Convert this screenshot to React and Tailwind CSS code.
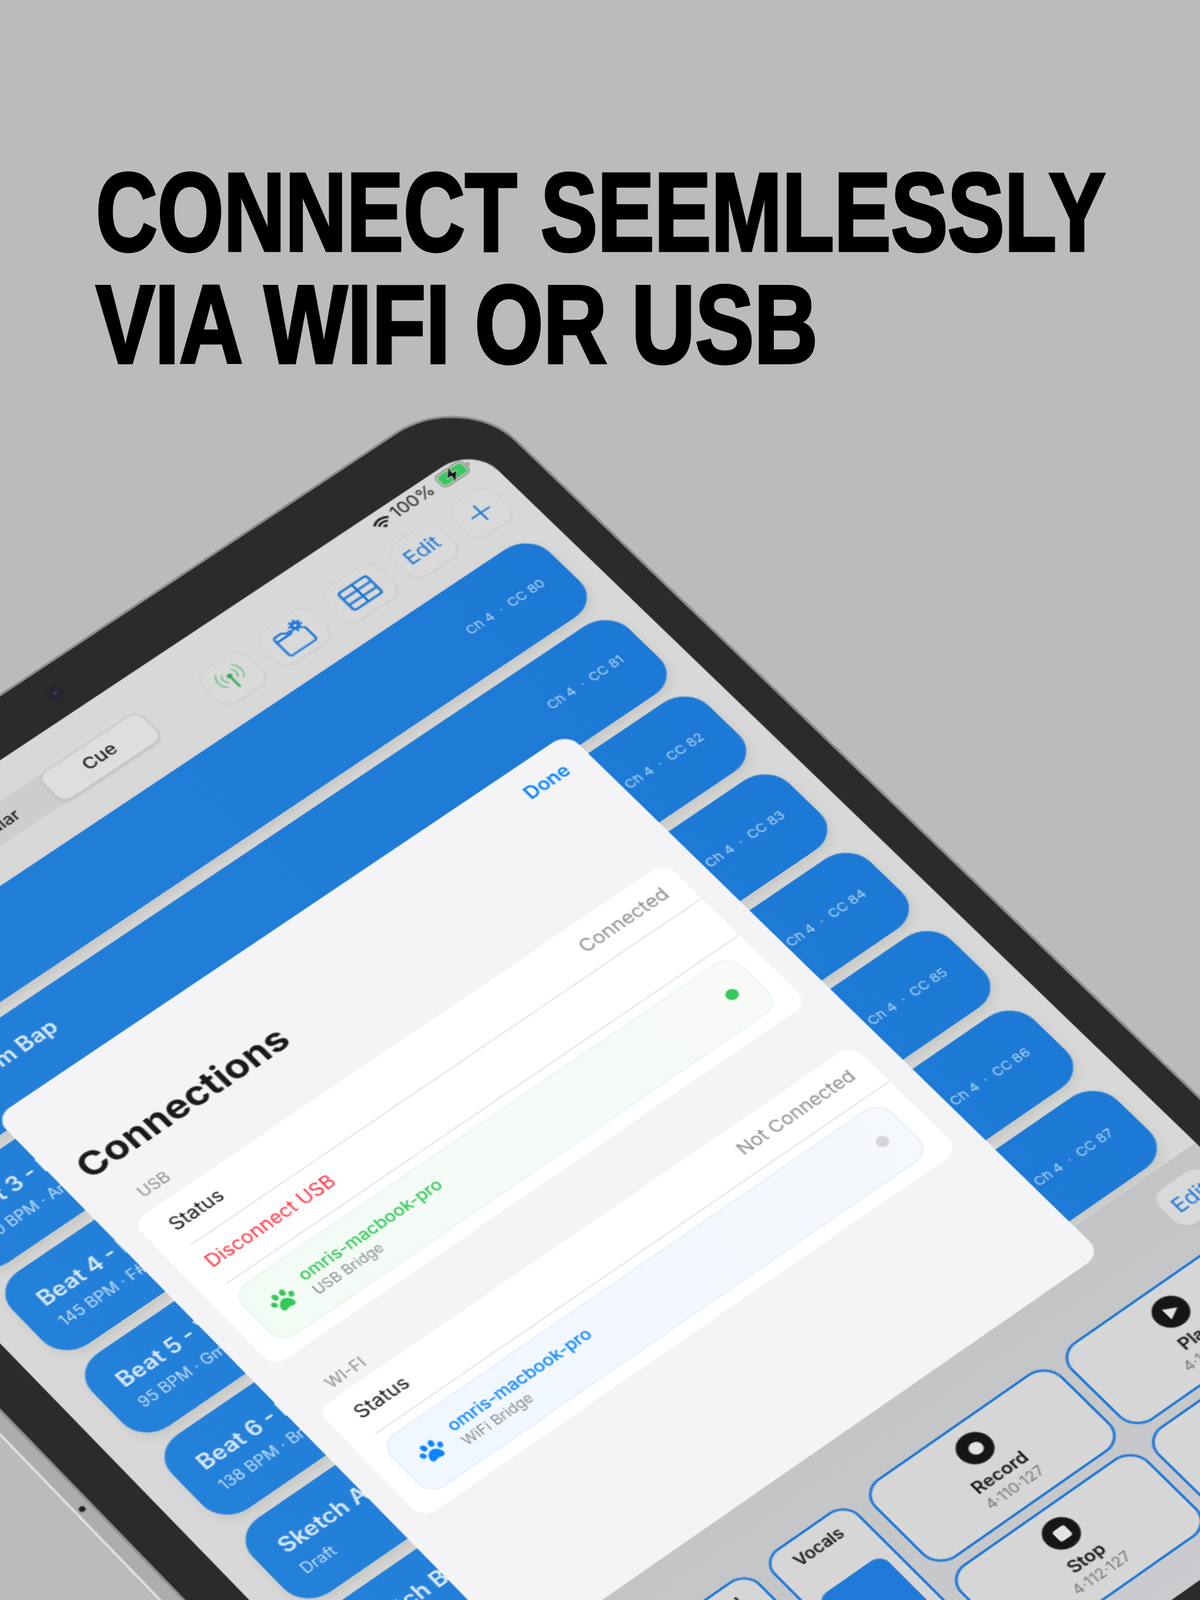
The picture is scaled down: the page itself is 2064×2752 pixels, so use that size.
const SCALE = 2064 / 1176;

// corners of the sheet as they land in the picture (shrunk coords, TL TR BR BL)
const SHEET_QUAD = [
  [-9, 1095],
  [552, 718],
  [1076, 1228],
  [508, 1622],
];

// sheet rectangle inside the device box
const SHEET_RECT = { x: 155, y: 303, w: 540, h: 620 };

function tiltMatrix(quad, rect) {
  const [p0, p1, p2, p3] = quad.map(([x, y]) => [x * SCALE, y * SCALE]);
  const dx1 = p1[0] - p2[0];
  const dy1 = p1[1] - p2[1];
  const dx2 = p3[0] - p2[0];
  const dy2 = p3[1] - p2[1];
  const sx = p0[0] - p1[0] + p2[0] - p3[0];
  const sy = p0[1] - p1[1] + p2[1] - p3[1];
  const det = dx1 * dy2 - dx2 * dy1;
  const g = (sx * dy2 - dx2 * sy) / det;
  const h = (dx1 * sy - sx * dy1) / det;
  const a = p1[0] - p0[0] + g * p1[0];
  const b = p3[0] - p0[0] + h * p3[0];
  const d = p1[1] - p0[1] + g * p1[1];
  const e = p3[1] - p0[1] + h * p3[1];
  const m11 = a / rect.w;
  const m12 = b / rect.h;
  const m21 = d / rect.w;
  const m22 = e / rect.h;
  const m31 = g / rect.w;
  const m32 = h / rect.h;
  const tx = p0[0] - m11 * rect.x - m12 * rect.y;
  const ty = p0[1] - m21 * rect.x - m22 * rect.y;
  const tw = 1 - m31 * rect.x - m32 * rect.y;
  return `matrix3d(${[m11, m21, 0, m31, m12, m22, 0, m32, 0, 0, 1, 0, tx, ty, 0, tw].join(",")})`;
}

const rows = [
  { title: "Beat 1 - Trap", sub: "140 BPM · Cm", cc: 80 },
  { title: "Beat 2 - Boom Bap", sub: "90 BPM · Dm", cc: 81 },
  { title: "Beat 3 - Dusty", sub: "120 BPM · Am", cc: 82 },
  { title: "Beat 4 - Dark", sub: "145 BPM · F#m", cc: 83 },
  { title: "Beat 5 - Vibe", sub: "95 BPM · Gm", cc: 84 },
  { title: "Beat 6 - Drill", sub: "138 BPM · Bm", cc: 85 },
  { title: "Sketch A", sub: "Draft", cc: 86 },
  { title: "Sketch B", sub: "Draft", cc: 87 },
];

function ToolButton({ className, children }) {
  return (
    <div className={`h-10 flex items-center justify-center rounded-[12px] border border-[#d0d0d0] bg-[#d9d9d9] shadow-[0_1px_2px_rgba(0,0,0,0.04)] ${className}`}>
      {children}
    </div>
  );
}

function AntennaIcon() {
  return (
    <svg width="25" height="23" viewBox="0 0 30 28" fill="none" stroke="#34b35a" strokeLinecap="round">
      <circle cx="15" cy="10" r="2.600" fill="#2ea84f" stroke="none" />
      <path d="M15 12v13" strokeWidth="2.200" stroke="#2ea84f" />
      <path d="M9.500 15a7.500 7.500 0 0 1 0-10M20.500 5a7.500 7.500 0 0 1 0 10" strokeWidth="1.500" opacity="0.7" />
      <path d="M5.500 19a13 13 0 0 1 0-18M24.500 1a13 13 0 0 1 0 18" strokeWidth="1.500" opacity="0.6" />
    </svg>
  );
}

function FolderGearIcon() {
  return (
    <svg width="32" height="30" viewBox="0 -4 40 38" fill="none" stroke="#1f78d6" strokeWidth="2.400" strokeLinejoin="round" strokeLinecap="round">
      <path d="M3 11V6.500A2.500 2.500 0 0 1 5.500 4h6.600a2.500 2.500 0 0 1 1.800.7L16 7h5" />
      <path d="M3 10h17l1.500-2M34 12a2.500 2.500 0 0 1 1 2V28.500A2.500 2.500 0 0 1 32.500 31H5.500A2.500 2.500 0 0 1 3 28.500V10" />
      <circle cx="29" cy="5" r="3.400" strokeWidth="3.600" />
      <circle cx="29" cy="5" r="6" strokeWidth="2.400" strokeDasharray="2.400 2.310" strokeLinecap="butt" />
    </svg>
  );
}

function TableIcon() {
  return (
    <svg width="30" height="24" viewBox="0 0 38 30" fill="none" stroke="#1f78d6" strokeWidth="2.600" strokeLinejoin="round">
      <rect x="2" y="2" width="34" height="26" rx="3" />
      <path d="M2 10.500h34M2 19.500h34M19 2v26" />
    </svg>
  );
}

function WifiGlyph() {
  return (
    <svg width="16" height="12" viewBox="0 0 18 14" fill="none" stroke="#1a1a1a" strokeWidth="2.200">
      <path d="M1 5.500a11.500 11.500 0 0 1 16 0" />
      <path d="M4 8.700a7 7 0 0 1 10 0" />
      <path d="M9 13.500l-2.400-2.500a3.400 3.400 0 0 1 4.800 0z" fill="#1a1a1a" stroke="none" />
    </svg>
  );
}

function BatteryGlyph() {
  return (
    <svg width="30" height="15" viewBox="0 0 30 15" fill="none">
      <rect x="0.700" y="0.700" width="25.600" height="13.600" rx="4" stroke="#8d8d8d" strokeWidth="1.200" />
      <rect x="2.200" y="2.200" width="22.600" height="10.600" rx="2.600" fill="#35c95c" />
      <path d="M27.700 5v5a2.600 2.600 0 0 0 0-5z" fill="#8d8d8d" />
      <path d="M16 -0.500L7.500 8.400h4.400l-1.600 7.100 8.500-9.100h-4.400z" fill="#151515" stroke="#d8d8d8" strokeWidth="0.800" />
    </svg>
  );
}

function PawIcon({ color }) {
  return (
    <svg width="22" height="20" viewBox="0 0 26 24" fill={color}>
      <ellipse cx="3.600" cy="11" rx="2.500" ry="3.200" transform="rotate(-20 3.600 11)" />
      <ellipse cx="9" cy="5.200" rx="2.700" ry="3.600" transform="rotate(-8 9 5.200)" />
      <ellipse cx="17" cy="5.200" rx="2.700" ry="3.600" transform="rotate(8 17 5.200)" />
      <ellipse cx="22.400" cy="11" rx="2.500" ry="3.200" transform="rotate(20 22.400 11)" />
      <path d="M13 10.500c3.600 0 7.200 4.600 7.200 8 0 2.700-2 3.600-3.800 3.300-1.200-.2-2.200-.7-3.400-.7s-2.200.5-3.400.7c-1.800.3-3.800-.6-3.800-3.300 0-3.400 3.600-8 7.200-8z" />
    </svg>
  );
}

function BeatRow({ title, sub, cc }) {
  return (
    <div className="h-[84px] shrink-0 flex items-center justify-between pl-5 pr-[21px] rounded-[24px] bg-gradient-to-r from-[#2481da] to-[#1c79d5] shadow-[0_5px_8px_rgba(70,80,60,0.12)]">
      <div className="flex flex-col gap-[3px]">
        <span className="text-[18px] leading-[26px] font-semibold text-[#d9e8f7]">{title}</span>
        <span className="text-[12.500px] leading-[18px] text-[#c3dcf3]">{sub}</span>
      </div>
      <div className="flex items-center gap-[6px] text-[11px] text-[#b4d4f1]">
        <span>Ch 4</span>
        <span>·</span>
        <span>CC {cc}</span>
      </div>
    </div>
  );
}

function Fader({ label }) {
  return (
    <div className="w-20 h-[186px] flex flex-col items-center pt-2 px-2 pb-3 gap-[26px] rounded-[16px] border-2 border-[#1f78d6] bg-[#d6d6d6]">
      <span className="text-[13px] leading-4 font-semibold text-[#161616]">{label}</span>
      <div className="w-full flex-1 rounded-[9px] bg-[#1f7ad7]" />
    </div>
  );
}

function PadGlyph({ kind }) {
  return (
    <div className="w-[28px] h-[28px] rounded-full bg-[#161616] flex items-center justify-center">
      {kind === "record" && <div className="w-[11px] h-[11px] rounded-full bg-[#e4e4e4]" />}
      {kind === "stop" && <div className="w-[11px] h-[11px] rounded-[2px] bg-[#e4e4e4]" />}
      {kind === "play" && (
        <svg width="14" height="14" viewBox="0 0 14 14">
          <path d="M3 1.500L13 7 3 12.500z" fill="#e4e4e4" />
        </svg>
      )}
      {kind === "rewind" && (
        <svg width="14" height="14" viewBox="0 0 14 14">
          <path d="M7 2L1 7l6 5zM13 2L7 7l6 5z" fill="#e4e4e4" />
        </svg>
      )}
    </div>
  );
}

function Pad({ kind, label, code }) {
  return (
    <div className="flex flex-col items-center justify-center rounded-[18px] border-2 border-[#1f78d6] bg-[#d6d6d6]">
      <PadGlyph kind={kind} />
      <span className="mt-[5px] text-[14px] leading-[18px] font-semibold text-[#161616]">{label}</span>
      <span className="text-[12px] leading-4 text-[#7a7a7a]">{code}</span>
    </div>
  );
}

function DeviceCard({ name, sub, dot, nameColor, paw, bg, border }) {
  return (
    <div className={`h-[60px] mx-4 flex items-center pl-[14px] pr-4 rounded-[14px] border ${bg} ${border}`}>
      <PawIcon color={paw} />
      <div className="ml-[11px] flex-1 flex flex-col">
        <span className={`text-[13.600px] leading-[19px] font-medium ${nameColor}`}>{name}</span>
        <span className="text-[11.500px] leading-[15px] text-[#8e8e93]">{sub}</span>
      </div>
      <div className={`w-[10px] h-[10px] rounded-full ${dot}`} />
    </div>
  );
}

function ConnectionsSheet() {
  return (
    <div className="absolute left-[120px] top-[256px] w-[540px] h-[620px] rounded-[14px] bg-[#f4f4f7] pl-[19px] pr-5 overflow-hidden">
      <div className="h-[52px] flex items-center justify-end">
        <span className="text-[15.500px] font-semibold text-[#0a84ff]">Done</span>
      </div>
      <h2 className="mt-[6px] h-[41px] text-[30.500px] leading-[41px] font-bold text-[#1a1a1a]">Connections</h2>
      <p className="mt-[15px] pl-5 h-[18px] text-[13px] leading-[18px] text-[#8e8e93]">USB</p>
      <div className="mt-2 h-[168px] rounded-[12px] bg-white">
        <div className="h-11 flex items-center justify-between ml-5 pr-4 border-b border-[#e3e3e6]">
          <span className="text-[15.500px] text-[#111]">Status</span>
          <span className="text-[15.500px] text-[#8e8e93]">Connected</span>
        </div>
        <div className="h-11 flex items-center ml-5 border-b border-[#e3e3e6]">
          <span className="text-[15.200px] text-[#ff3040]">Disconnect USB</span>
        </div>
        <div className="mt-2">
          <DeviceCard
            name="omris-macbook-pro"
            sub="USB Bridge"
            dot="bg-[#34c759]"
            nameColor="text-[#34c759]"
            paw="#34c759"
            bg="bg-gradient-to-r from-[#f3fbf5] to-[#f7faf7]"
            border="border-[#e6f5ea]"
          />
        </div>
      </div>
      <p className="mt-[28px] pl-5 h-[18px] text-[13px] leading-[18px] text-[#8e8e93]">WI-FI</p>
      <div className="mt-[4px] h-[124px] rounded-[12px] bg-white">
        <div className="h-11 flex items-center justify-between ml-5 pr-4 border-b border-[#e3e3e6]">
          <span className="text-[15.500px] text-[#111]">Status</span>
          <span className="text-[15px] text-[#8e8e93]">Not Connected</span>
        </div>
        <div className="mt-2">
          <DeviceCard
            name="omris-macbook-pro"
            sub="WiFi Bridge"
            dot="bg-[#d4d4d8]"
            nameColor="text-[#0a84ff]"
            paw="#0a84ff"
            bg="bg-gradient-to-r from-[#f0f7fe] to-[#f5f8fc]"
            border="border-[#e1eefb]"
          />
        </div>
      </div>
    </div>
  );
}

function Screen() {
  return (
    <div className="relative w-[775px] h-[1140px] rounded-[30px] overflow-hidden bg-[#d8d8d8] flex flex-col font-['Inter','Liberation_Sans',sans-serif]">
      {/* status bar */}
      <div className="h-[31px] shrink-0 flex items-start justify-end gap-[3px] pt-[3px] pr-3">
        <div className="pt-[3px]">
          <WifiGlyph />
        </div>
        <span className="text-[14.500px] leading-4 text-[#1a1a1a]">100%</span>
        <div className="pl-[3px]">
          <BatteryGlyph />
        </div>
      </div>

      {/* toolbar */}
      <div className="h-11 shrink-0 flex items-center justify-between pl-[239px] pr-[15.500px]">
        <div className="w-[190px] h-[33px] mb-[14px] flex items-center rounded-[9px] bg-[#cdcdcd]">
          <span className="flex-1 pr-[18px] text-center text-[14px] font-medium text-[#1a1a1a]">Regular</span>
          <div className="w-[95px] h-[33px] flex items-center justify-center rounded-[9px] bg-[#dedede] border border-[#c8c8c8] shadow-[0_1px_3px_rgba(0,0,0,0.14)]">
            <span className="text-[15px] font-medium text-[#1a1a1a]">Cue</span>
          </div>
        </div>
        <div className="flex items-center gap-3">
          <ToolButton className="w-11">
            <AntennaIcon />
          </ToolButton>
          <ToolButton className="w-[50px]">
            <FolderGearIcon />
          </ToolButton>
          <ToolButton className="w-[52px]">
            <TableIcon />
          </ToolButton>
          <ToolButton className="w-[46px]">
            <span className="text-[17px] text-[#1f78d6]">Edit</span>
          </ToolButton>
          <ToolButton className="w-10">
            <svg width="20" height="20" viewBox="0 0 22 22" stroke="#1f78d6" strokeWidth="1.800" strokeLinecap="round">
              <path d="M11 2v18M2 11h18" />
            </svg>
          </ToolButton>
        </div>
      </div>

      {/* beat rows */}
      <div className="mt-[17px] shrink-0 flex flex-col gap-[10.700px] pl-[25px] pr-[19px]">
        {rows.map((row) => (
          <BeatRow key={row.cc} {...row} />
        ))}
      </div>

      {/* bottom pads */}
      <div className="mt-[6px] flex-1 flex flex-col bg-gradient-to-b from-[#c2c4c5] to-[#cbcbcf] pt-[15.500px]">
        <div className="h-10 flex justify-end pr-[11px]">
          <ToolButton className="w-[46px]">
            <span className="text-[17px] text-[#1f78d6]">Edit</span>
          </ToolButton>
        </div>
        <div className="mt-[23px] flex justify-end gap-3 pr-[22px]">
          <Fader label="Drums" />
          <Fader label="Bass" />
          <Fader label="Sound" />
          <Fader label="Vocals" />
          <div className="w-[360px] h-[186px] grid grid-cols-2 grid-rows-2 gap-2">
            <Pad kind="record" label="Record" code="4·110·127" />
            <Pad kind="play" label="Play" code="4·111·127" />
            <Pad kind="stop" label="Stop" code="4·112·127" />
            <Pad kind="rewind" label="Rewind" code="4·113·127" />
          </div>
        </div>
      </div>

      <ConnectionsSheet />
    </div>
  );
}

export default function App() {
  return (
    <div className="relative w-[2064px] h-[2752px] overflow-hidden bg-[#bbbbbb]">
      <h1 className="pt-[268px] pl-[165px] text-[192px] leading-[193px] font-bold text-black whitespace-pre font-['Liberation_Sans',sans-serif] [-webkit-text-stroke:5px_black]">
        <span className="block origin-left scale-x-[0.763]">CONNECT SEEMLESSLY</span>
        <span className="block origin-left scale-x-[0.79]">VIA WIFI OR USB</span>
      </h1>

      <div
        className="absolute left-0 top-0 origin-top-left w-[841px] h-[1238px] pl-[35px] pr-[27px] pt-[47px] pb-[47px] rounded-[66px] bg-[#2b2b2b] border-[2px] border-[#8f8f8f]"
        style={{ transform: tiltMatrix(SHEET_QUAD, SHEET_RECT) }}
      >
        {/* aluminium side and volume button hole */}
        <div className="absolute -left-[15px] top-[40px] bottom-[40px] w-[13px] border-l-2 border-[#dedede] bg-[#adadad]" />
        <div className="absolute -left-[11px] top-[616px] w-[5px] h-[5px] rounded-full bg-[#222]" />
        <div className="absolute left-[421px] top-[18px] w-[13px] h-[13px] flex items-center justify-center rounded-full bg-[#262630]">
          <div className="w-[3px] h-[3px] rounded-full bg-[#3d3d70]" />
        </div>
        <Screen />
      </div>
    </div>
  );
}
